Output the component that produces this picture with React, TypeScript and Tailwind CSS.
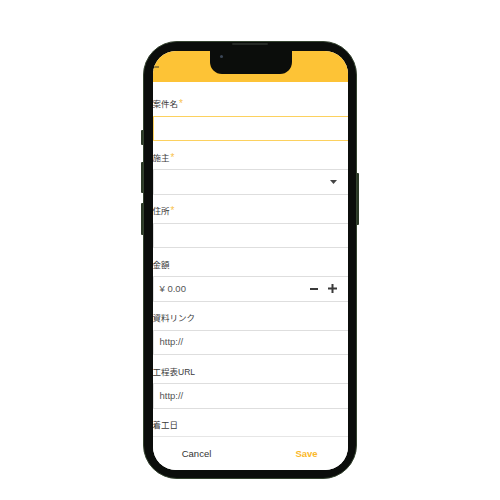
import React from "react";

const cjk = { fontFamily: '"Liberation Sans", "Noto Sans CJK JP", sans-serif' };

function Label({ text, required }: { text: string; required?: boolean }) {
  return (
    <div className="h-[12px] flex items-center text-[8.5px] leading-none text-[#3a3a3a]">
      <span>{text}</span>
      {required && <span className="ml-[1px] -mt-[1px] text-[10px] leading-none text-[#f8c24c]">*</span>}
    </div>
  );
}

function Field({
  label,
  required,
  focused,
  children,
}: {
  label: string;
  required?: boolean;
  focused?: boolean;
  children?: React.ReactNode;
}) {
  return (
    <div className="flex flex-col gap-[5px]">
      <Label text={label} required={required} />
      <div
        className={
          focused
            ? "h-[25.5px] w-[204px] border-y-[1.5px] border-l-[1.5px] border-solid border-[#fcd15f] flex items-center pl-[6px] pr-[20px]"
            : "h-[25.5px] w-[204px] border-y border-l border-solid border-[#dedede] flex items-center pl-[6px] pr-[20px]"
        }
      >
        {children}
      </div>
    </div>
  );
}

export default function App() {
  return (
    <div className="w-[500px] h-[500px] bg-white flex justify-center pt-[41px]" style={cjk}>
      <div className="relative w-[214px] h-[438px] rounded-[34px] bg-[#0b0d0b] border-[1.5px] border-[#34432f] p-[8.5px]">
        {/* side buttons */}
        <div className="absolute -left-[3px] top-[88px] w-[2px] h-[15px] rounded-l-[1px] bg-[#2a3826]" />
        <div className="absolute -left-[3px] top-[120px] w-[2px] h-[31px] rounded-l-[1px] bg-[#2a3826]" />
        <div className="absolute -left-[3px] top-[161px] w-[2px] h-[32px] rounded-l-[1px] bg-[#2a3826]" />
        <div className="absolute -right-[3px] top-[131px] w-[2px] h-[52px] rounded-r-[1px] bg-[#2a3826]" />
        {/* speaker */}
        <div className="absolute left-[88px] top-[0.5px] w-[36px] h-[2px] rounded-full bg-[#262a26]" />

        <div className="relative w-full h-full rounded-[23px] overflow-hidden bg-white flex flex-col">
          {/* notch */}
          <div className="absolute left-[57px] top-0 w-[82px] h-[23px] rounded-b-[12px] bg-[#0b0d0b]">
            <div className="absolute left-[10px] top-[4px] w-[3px] h-[3px] rounded-full bg-[#3b4656]" />
          </div>

          <div className="h-[31px] shrink-0 bg-[#fdc336] flex items-center">
            <svg width="12" height="10" viewBox="0 0 12 10" className="-ml-[5px] mt-[1px]">
              <path d="M1 5h10M1 5l4-4M1 5l4 4" stroke="#3a3a2a" strokeWidth="1.2" fill="none" />
            </svg>
          </div>

          <div className="flex-1 flex flex-col gap-[11px] pt-[17px] overflow-hidden">
            <Field label="案件名" required focused />
            <Field label="施主" required>
              <div className="flex-1" />
              <svg width="7" height="4" viewBox="0 0 7 4">
                <path d="M0 0h7L3.5 4z" fill="#444" />
              </svg>
            </Field>
            <Field label="住所" required />
            <Field label="金額">
              <span className="text-[9.5px] text-[#555]">¥ 0.00</span>
              <div className="flex-1" />
              <div className="w-[8px] h-[2px] bg-[#3a3a3a]" />
              <svg width="9" height="9" viewBox="0 0 9 9" className="ml-[10px]">
                <path d="M0 4.5h9M4.5 0v9" stroke="#3a3a3a" strokeWidth="2" />
              </svg>
            </Field>
            <Field label="資料リンク">
              <span className="text-[9.5px] text-[#555]">http://</span>
            </Field>
            <Field label="工程表URL">
              <span className="text-[9.5px] text-[#555]">http://</span>
            </Field>
            <Label text="着工日" />
          </div>

          <div className="h-[34px] shrink-0 border-t border-[#e6e6e6] bg-white flex justify-between items-start pt-[10px]">
            <div className="w-[88px] text-center text-[9.5px] text-[#333]">Cancel</div>
            <div className="w-[82px] text-center text-[9.5px] font-semibold text-[#fbb829]">Save</div>
          </div>
        </div>
      </div>
    </div>
  );
}
